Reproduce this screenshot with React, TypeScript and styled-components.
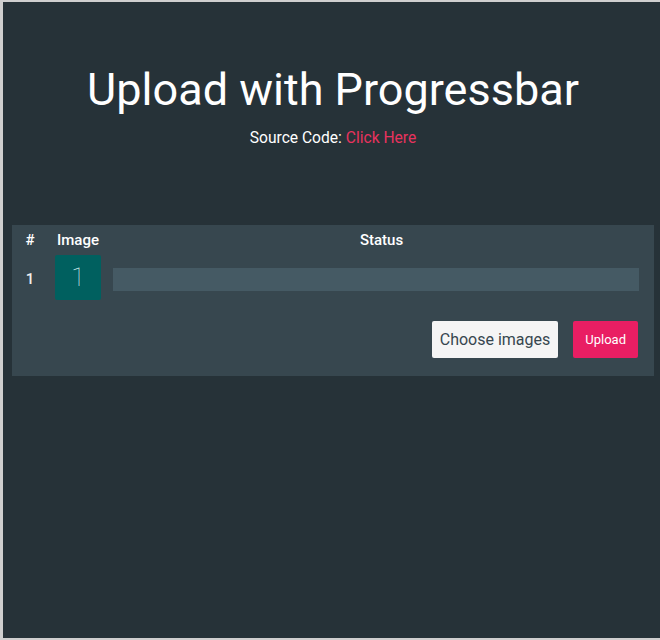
import React from "react";
import styled, { createGlobalStyle } from "styled-components";

const Global = createGlobalStyle`
  html, body { margin: 0; padding: 0; background: #d6d6d6; }
  body { font-family: Roboto, "Noto Sans", sans-serif; }
  * { box-sizing: border-box; }
`;

const Frame = styled.div`
  width: 660px;
  height: 640px;
  padding: 2px 0 2px 3px;
  background: #cfcfcf;
`;

const Page = styled.div`
  height: 100%;
  background: #263238;
  color: #fff;
  display: flex;
  flex-direction: column;
  padding: 0 6px 0 9px;
`;

const Header = styled.header`
  display: flex;
  flex-direction: column;
  align-items: center;
  padding-top: 60px;
  height: 223px;
`;

const Title = styled.h1`
  margin: 0;
  font-size: 45px;
  font-weight: 400;
  line-height: 56px;
  color: #fff;
`;

const Sub = styled.p`
  margin: 10px 0 0;
  font-size: 15.6px;
  line-height: 20px;
  color: #fff;
`;

const Link = styled.a`
  color: #e8325e;
  text-decoration: none;
`;

const Panel = styled.section`
  background: #37474f;
  padding-bottom: 18px;
`;

const Grid = styled.div`
  display: grid;
  grid-template-columns: 36px 61px 1fr;
`;

const HeadCell = styled.div<{ $align?: string }>`
  font-size: 15px;
  font-weight: 500;
  line-height: 18px;
  padding: 6px 0 3px;
  text-align: ${(p) => p.$align || "left"};
  padding-left: ${(p) => (p.$align === "left" ? "9px" : "0")};
`;

const Cell = styled.div<{ $align?: string; $shift?: number }>`
  display: flex;
  align-items: center;
  justify-content: ${(p) => p.$align || "flex-start"};
  height: 51px;
  padding-top: ${(p) => p.$shift || 0}px;
  font-size: 15px;
  font-weight: 500;
  color: #f0f0f0;
`;

const Thumb = styled.div`
  width: 46px;
  height: 45px;
  margin-left: 7px;
  background: #00605f;
  border-radius: 2px;
  display: flex;
  align-items: center;
  justify-content: center;
  font-size: 25px;
  font-weight: 100;
  color: #d0ecec;
`;

const Track = styled.div`
  flex: 1;
  height: 23px;
  margin: 0 15px 0 4px;
  background: #455a64;
`;

const Actions = styled.div`
  display: flex;
  justify-content: flex-end;
  gap: 15px;
  padding: 18px 16px 0 0;
`;

const Button = styled.button<{ $primary?: boolean }>`
  height: 37px;
  border: none;
  border-radius: 2px;
  font-family: Roboto, "Noto Sans", sans-serif;
  padding: 0 ${(p) => (p.$primary ? "12px" : "8px")};
  font-size: ${(p) => (p.$primary ? "13px" : "16px")};
  background: ${(p) => (p.$primary ? "#e91e63" : "#f5f5f5")};
  color: ${(p) => (p.$primary ? "#fff" : "#37474f")};
`;

export default function App() {
  return (
    <>
      <Global />
      <Frame>
        <Page>
          <Header>
            <Title>Upload with Progressbar</Title>
            <Sub>
              Source Code: <Link href="#">Click Here</Link>
            </Sub>
          </Header>
          <Panel>
            <Grid>
              <HeadCell $align="center">#</HeadCell>
              <HeadCell $align="left">Image</HeadCell>
              <HeadCell $align="center">Status</HeadCell>
              <Cell $align="center" $shift={3}>1</Cell>
              <Cell>
                <Thumb>1</Thumb>
              </Cell>
              <Cell $shift={4}>
                <Track />
              </Cell>
            </Grid>
            <Actions>
              <Button>Choose images</Button>
              <Button $primary>Upload</Button>
            </Actions>
          </Panel>
        </Page>
      </Frame>
    </>
  );
}
